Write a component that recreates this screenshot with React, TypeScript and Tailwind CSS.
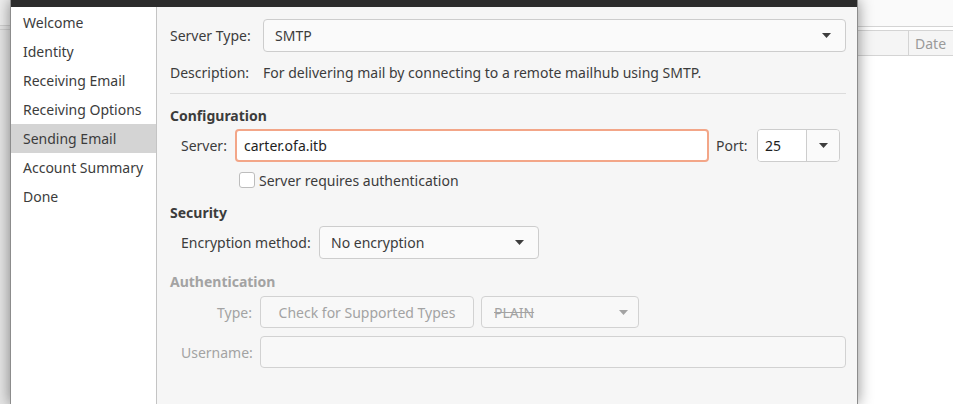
import React from "react"

const steps = ["Welcome", "Identity", "Receiving Email", "Receiving Options", "Sending Email", "Account Summary", "Done"]

function Arrow({ color = "#3d3d3d" }: { color?: string }) {
  return (
    <svg width="9" height="5" viewBox="0 0 9 5">
      <path d="M0 0h9L4.5 5z" fill={color} />
    </svg>
  )
}

export default function App() {
  return (
    <div
      className="w-[953px] h-[404px] overflow-hidden flex bg-white text-[14px] text-[#3c3c3c]"
      style={{ fontFamily: '"Noto Sans", "Open Sans", sans-serif' }}
    >
      {/* app behind, left */}
      <div className="w-[10px] shrink-0 bg-[#e6e6e6] flex flex-col">
        <div className="h-[26px] border-b border-[#d0d0d0] bg-[#efefef]" />
        <div className="h-[4px] border-b border-[#d0d0d0]" />
      </div>

      {/* dialog */}
      <div className="relative z-10 w-[848px] shrink-0 flex flex-col border-x border-[#8c8c8c] shadow-[0_0_14px_rgba(0,0,0,0.45)]">
        <div className="h-[7px] bg-[#2c2c2c]" />
        <div className="flex flex-1">
          <div className="w-[146px] shrink-0 bg-white border-r border-[#c4c4c4] pt-px">
            {steps.map(s => (
              <div
                key={s}
                className={`h-[29px] flex items-center pl-[12px] ${s === "Sending Email" ? "bg-[#d4d4d4]" : ""}`}
              >
                {s}
              </div>
            ))}
          </div>

          <div className="flex-1 bg-[#f6f6f6] pl-[13px] pr-[11px] pt-[12px]">
            <div className="flex items-center h-[33px]">
              <div className="w-[93px]">Server Type:</div>
              <div className="flex-1 h-full flex items-center justify-between pl-[11px] pr-[14px] rounded-[4px] border border-[#cdcdcd] bg-[#fafafa]">
                <span>SMTP</span>
                <Arrow />
              </div>
            </div>

            <div className="flex items-center h-[20px] mt-[10px]">
              <div className="w-[93px]">Description:</div>
              <div>For delivering mail by connecting to a remote mailhub using SMTP.</div>
            </div>

            <div className="mt-[11px] border-t border-[#dcdcdc]" />

            <div className="mt-[11px] h-[20px] flex items-center font-bold">Configuration</div>

            <div className="mt-[4px] flex items-center h-[33px] pl-[11px]">
              <div className="w-[54px]">Server:</div>
              <div className="w-[474px] h-full flex items-center px-[7px] rounded-[4px] border-2 border-[#f3a688] bg-white text-[#1e1e1e]">
                carter.ofa.itb
              </div>
              <div className="ml-[7px] w-[41px]">Port:</div>
              <div className="w-[83px] h-full flex rounded-[4px] border border-[#cdcdcd] overflow-hidden">
                <div className="w-[48px] bg-white flex items-center pl-[7px] text-[#1e1e1e]">25</div>
                <div className="flex-1 bg-[#fafafa] border-l border-[#cdcdcd] flex items-center justify-center">
                  <Arrow />
                </div>
              </div>
            </div>

            <div className="mt-[10px] flex items-center h-[16px] pl-[69px]">
              <div className="w-[16px] h-[16px] rounded-[3px] border border-[#bdbdbd] bg-white" />
              <span className="ml-[4px]">Server requires authentication</span>
            </div>

            <div className="mt-[14px] h-[20px] flex items-center font-bold">Security</div>

            <div className="mt-[4px] flex items-center h-[33px] pl-[11px]">
              <div className="w-[138px]">Encryption method:</div>
              <div className="w-[220px] h-full flex items-center justify-between pl-[11px] pr-[14px] rounded-[4px] border border-[#cdcdcd] bg-[#fafafa]">
                <span>No encryption</span>
                <Arrow />
              </div>
            </div>

            <div className="mt-[12px] h-[20px] flex items-center font-bold text-[#a3a3a3]">Authentication</div>

            <div className="mt-[5px] flex items-center h-[32px] pl-[11px] text-[#a3a3a3]">
              <div className="w-[79px] text-right pr-[8px]">Type:</div>
              <div className="w-[214px] h-full flex items-center justify-center rounded-[4px] border border-[#d2d2d2] bg-[#f8f8f8]">
                Check for Supported Types
              </div>
              <div className="ml-[7px] w-[158px] h-full flex items-center justify-between pl-[12px] pr-[10px] rounded-[4px] border border-[#d2d2d2] bg-[#f8f8f8]">
                <span className="line-through">PLAIN</span>
                <Arrow color="#a3a3a3" />
              </div>
            </div>

            <div className="mt-[8px] flex items-center h-[32px] pl-[11px] text-[#a3a3a3]">
              <div className="w-[79px] text-right pr-[8px]">Username:</div>
              <div className="flex-1 h-full rounded-[4px] border border-[#d2d2d2] bg-[#f8f8f8]" />
            </div>
          </div>
        </div>
      </div>

      {/* app behind, right */}
      <div className="flex-1 flex flex-col bg-white">
        <div className="h-[27px] bg-[#fafafa] border-b border-[#d4d4d4]" />
        <div className="h-[26px] mt-[3px] flex bg-[#f5f5f5] border-y border-[#d4d4d4]">
          <div className="w-[51px] border-r border-[#d4d4d4]" />
          <div className="pl-[6px] flex items-center text-[#9a9a9a]">Date</div>
        </div>
        <div className="flex-1" />
      </div>
    </div>
  )
}
